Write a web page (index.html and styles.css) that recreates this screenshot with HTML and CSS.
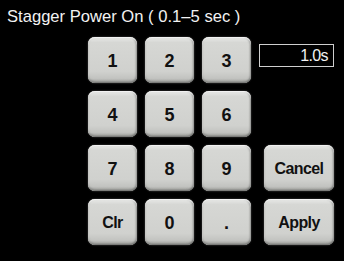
FILE: index.html
```html
<!DOCTYPE html>
<html>
<head>
<meta charset="utf-8">
<link rel="stylesheet" href="styles.css">
</head>
<body>
<div class="screen">
  <div class="title">Stagger Power On ( 0.1–5 sec )</div>
  <div class="pad">
    <button class="key">1</button>
    <button class="key">2</button>
    <button class="key">3</button>
    <div class="cell"><div class="field">1.0s</div></div>
    <button class="key">4</button>
    <button class="key">5</button>
    <button class="key">6</button>
    <div class="cell"></div>
    <button class="key">7</button>
    <button class="key">8</button>
    <button class="key">9</button>
    <div class="cell"><button class="key wide">Cancel</button></div>
    <button class="key word">Clr</button>
    <button class="key">0</button>
    <button class="key">.</button>
    <div class="cell"><button class="key wide">Apply</button></div>
  </div>
</div>
</body>
</html>
```
FILE: styles.css
```css
html, body {
  margin: 0;
  padding: 0;
  background: #000;
}
.screen {
  width: 344px;
  height: 261px;
  background: #000;
  font-family: "Liberation Sans", Arial, sans-serif;
  overflow: hidden;
}
.title {
  color: #f2f2f2;
  font-size: 16.6px;
  line-height: 18px;
  padding: 8px 0 0 7px;
  height: 30px;
  box-sizing: border-box;
  white-space: nowrap;
}
.pad {
  display: grid;
  grid-template-columns: 49px 49px 49px 75px;
  grid-auto-rows: 46px;
  column-gap: 8px;
  row-gap: 8px;
  margin: 7px 0 0 88px;
}
.cell {
  display: flex;
  align-items: center;
  justify-content: flex-end;
}
.key {
  font-family: "Liberation Sans", Arial, sans-serif;
  font-weight: bold;
  font-size: 18px;
  color: #111;
  border: none;
  padding: 2px 0 0 0;
  margin: 0;
  width: 100%;
  height: 100%;
  border-radius: 7px;
  background: linear-gradient(#e9eae8 0%, #d6d7d4 12%, #d0d1ce 75%, #c2c3c0 90%, #9a9b98 100%);
  box-shadow: inset 0 1px 1px #f7f7f7, inset 0 -1px 2px #6e6f6c, inset 1px 0 1px #e0e0de, inset -1px 0 2px #909190, 0 0 2px #555;
}
.key.word {
  font-size: 16px;
  letter-spacing: -0.6px;
}
.key.wide {
  width: 70px;
  font-size: 16px;
  letter-spacing: -0.6px;
}
.field {
  width: 75px;
  height: 23px;
  box-sizing: border-box;
  border: 1px solid #cfcfcf;
  color: #f2f2f2;
  font-size: 16px;
  line-height: 21px;
  text-align: right;
  padding-right: 5px;
  letter-spacing: -0.6px;
  margin-top: -10px;
}
```
